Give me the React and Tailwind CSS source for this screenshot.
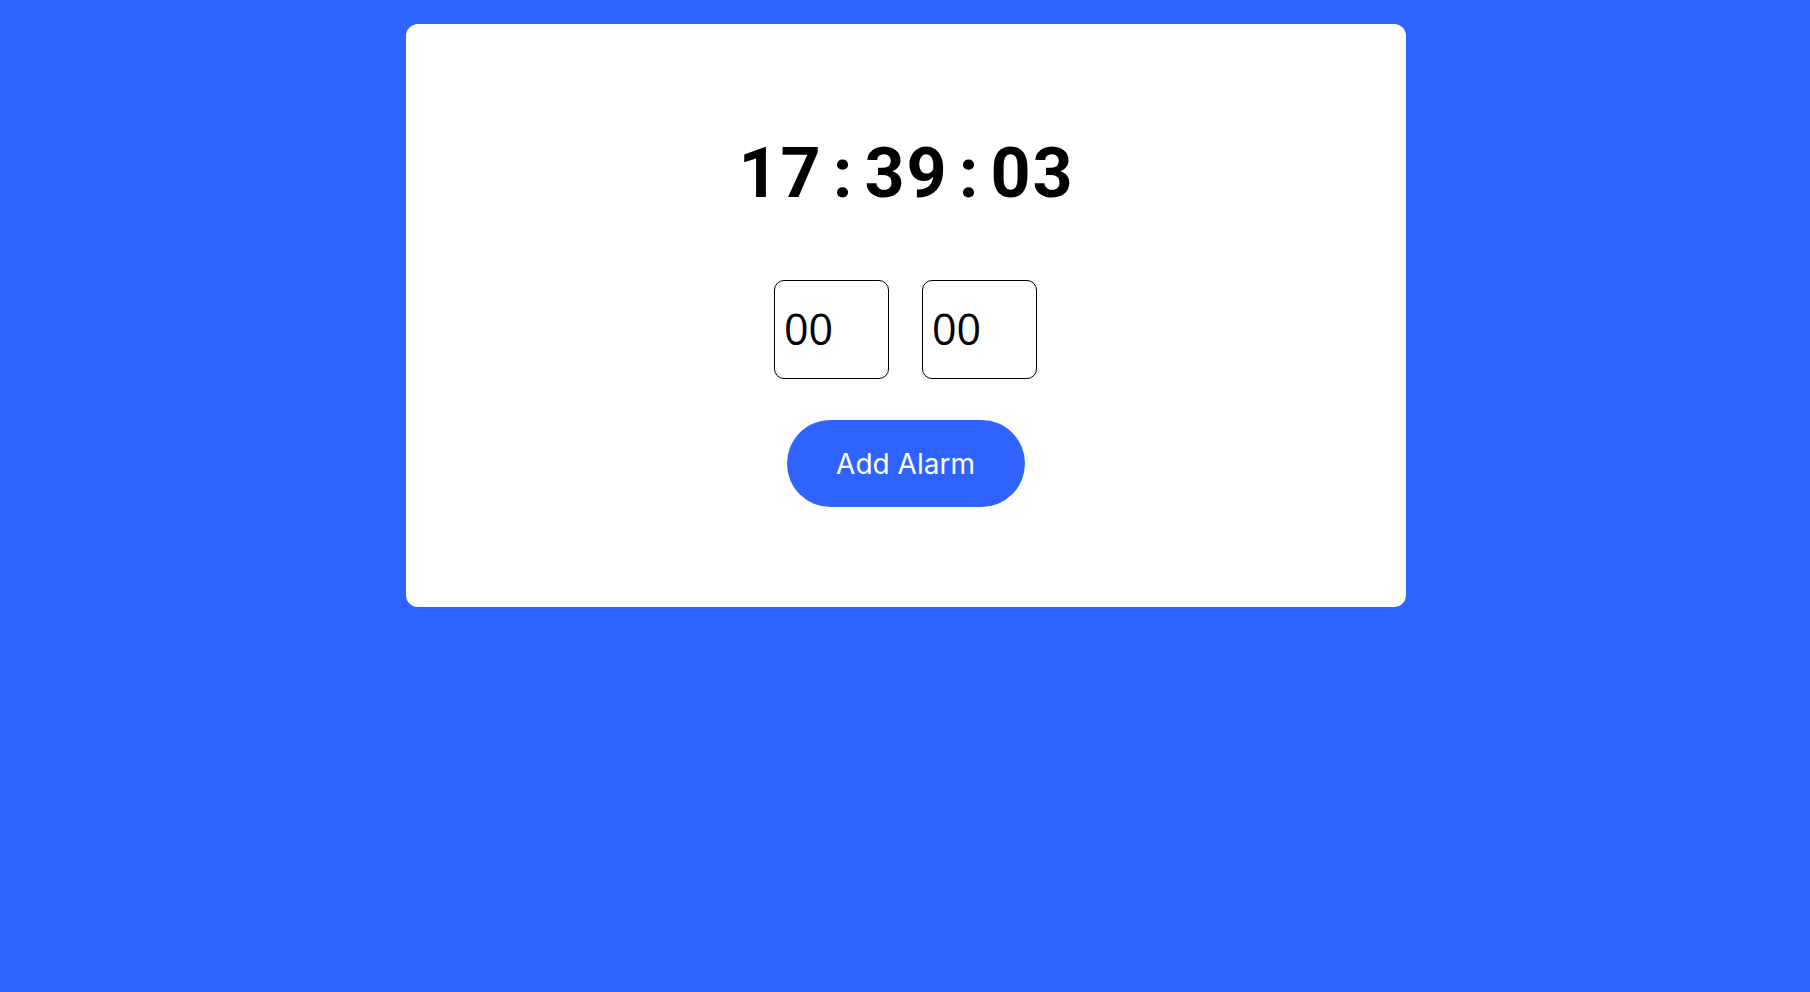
import React, { useState } from 'react';

const TIME = '17:39:03';

const App = () => {
  const [hours, setHours] = useState('00');
  const [minutes, setMinutes] = useState('00');

  return (
    <div className="min-h-screen w-full bg-[#2e63ff] flex justify-center pt-6 pl-px">
      <div className="w-[1000px] h-[583px] bg-white rounded-xl flex flex-col items-center">
        {/* Clock - monospaced cells */}
        <div className="mt-[114px] flex text-[70px] leading-none font-bold text-black font-['Roboto',sans-serif]">
          {TIME.split('').map((ch, i) => (
            <span key={i} className="w-[42px] text-center inline-block">
              {ch}
            </span>
          ))}
        </div>

        {/* Alarm inputs */}
        <div className="mt-[72px] flex gap-[33px]">
          <input
            type="text"
            value={hours}
            onChange={(e) => setHours(e.target.value)}
            className="w-[115px] h-[99px] border-[1.5px] border-black rounded-[10px] px-[9px] pb-[2px] text-[43px] text-black outline-none font-['Open_Sans',sans-serif]"
          />
          <input
            type="text"
            value={minutes}
            onChange={(e) => setMinutes(e.target.value)}
            className="w-[115px] h-[99px] border-[1.5px] border-black rounded-[10px] px-[9px] pb-[2px] text-[43px] text-black outline-none font-['Open_Sans',sans-serif]"
          />
        </div>

        {/* Button */}
        <button
          type="button"
          className="mt-[41px] w-[238px] h-[87px] rounded-full bg-[#2e63ff] text-white text-[28px] font-['Inter',sans-serif]"
        >
          Add Alarm
        </button>
      </div>
    </div>
  );
};

export default App;
